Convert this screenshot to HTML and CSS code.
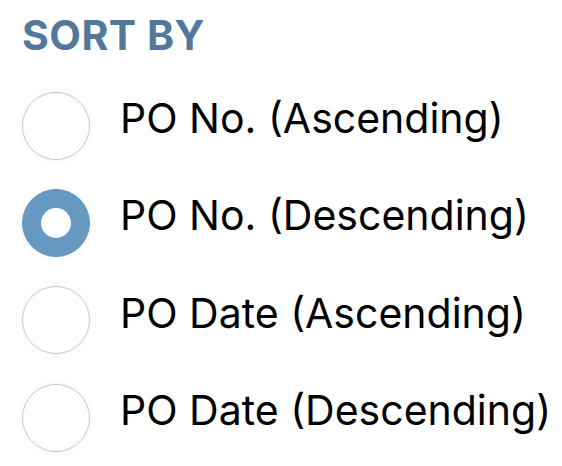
FILE: index.html
```html
<!DOCTYPE html>
<html>
<head>
<meta charset="utf-8">
<link rel="stylesheet" href="styles.css">
</head>
<body>
<div class="panel">
  <div class="title">SORT BY</div>
  <div class="options">
    <div class="option"><span class="radio"></span><span class="label">PO No. (Ascending)</span></div>
    <div class="option"><span class="radio selected"></span><span class="label">PO No. (Descending)</span></div>
    <div class="option"><span class="radio"></span><span class="label">PO Date (Ascending)</span></div>
    <div class="option"><span class="radio"></span><span class="label">PO Date (Descending)</span></div>
  </div>
</div>
</body>
</html>
```

FILE: styles.css
```css
html, body {
  margin: 0;
  padding: 0;
  background: #ffffff;
}
body {
  font-family: Inter, "Noto Sans", sans-serif;
  width: 562px;
  height: 466px;
  overflow: hidden;
}
.panel {
  padding-left: 22px;
  padding-top: 15px;
}
.title {
  font-size: 41px;
  line-height: 41px;
  font-weight: 700;
  color: #52799b;
  letter-spacing: 0.5px;
}
.options {
  margin-top: 21px;
  display: flex;
  flex-direction: column;
}
.option {
  height: 97.3px;
  display: flex;
  align-items: center;
  gap: 30px;
}
.radio {
  width: 66px;
  height: 66px;
  border-radius: 50%;
  border: 1px solid #c8c8c8;
  background: #ffffff;
  box-shadow: 0 0 6px rgba(0, 0, 0, 0.06);
  flex: none;
  box-sizing: content-box;
  display: flex;
  align-items: center;
  justify-content: center;
}
.radio.selected {
  background: #6699c2;
  border-color: #6b97bd;
}
.radio.selected::after {
  content: "";
  width: 30px;
  height: 30px;
  border-radius: 50%;
  background: #ffffff;
}
.label {
  font-size: 41px;
  line-height: 41px;
  color: #000000;
  padding-bottom: 14px;
}
```
